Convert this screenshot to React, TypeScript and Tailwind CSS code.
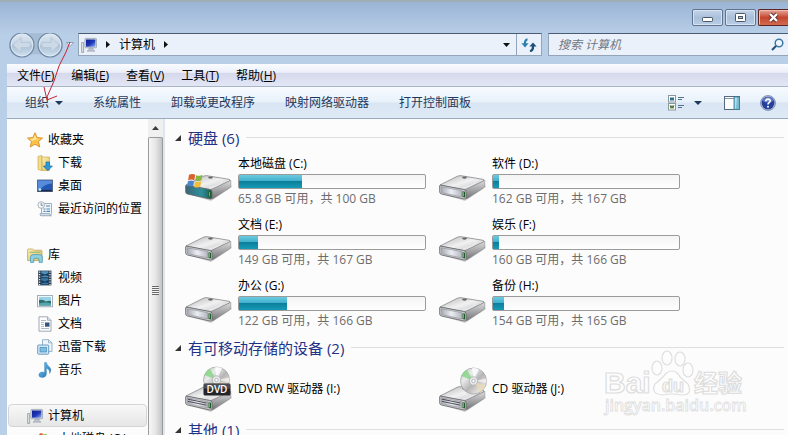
import type { ReactNode } from "react";

type Drive = { name: string; info: string; used: number; system?: boolean };

const drives: Drive[] = [
  { name: "本地磁盘 (C:)", info: "65.8 GB 可用，共 100 GB", used: 34, system: true },
  { name: "软件 (D:)", info: "162 GB 可用，共 167 GB", used: 3 },
  { name: "文档 (E:)", info: "149 GB 可用，共 167 GB", used: 10 },
  { name: "娱乐 (F:)", info: "160 GB 可用，共 166 GB", used: 3 },
  { name: "办公 (G:)", info: "122 GB 可用，共 166 GB", used: 26 },
  { name: "备份 (H:)", info: "154 GB 可用，共 165 GB", used: 6 },
];

const menus = [
  ["文件", "F"],
  ["编辑", "E"],
  ["查看", "V"],
  ["工具", "T"],
  ["帮助", "H"],
];

const commands = ["系统属性", "卸载或更改程序", "映射网络驱动器", "打开控制面板"];

function Defs() {
  return (
    <svg className="absolute h-0 w-0" aria-hidden="true">
      <defs>
        <linearGradient id="top" x1="0" y1="0" x2="1" y2="1">
          <stop offset="0" stopColor="#b4b4b6" />
          <stop offset="0.5" stopColor="#f1f1f2" />
          <stop offset="1" stopColor="#b9babc" />
        </linearGradient>
        <linearGradient id="side" x1="0" y1="0" x2="0" y2="1">
          <stop offset="0" stopColor="#dcdcdc" />
          <stop offset="1" stopColor="#707175" />
        </linearGradient>
        <linearGradient id="front" x1="0" y1="0" x2="1" y2="0">
          <stop offset="0" stopColor="#a7a9b2" />
          <stop offset="0.5" stopColor="#eceef5" />
          <stop offset="1" stopColor="#b7b9c2" />
        </linearGradient>
        <linearGradient id="sysfront" x1="0" y1="0" x2="1" y2="0">
          <stop offset="0" stopColor="#3b6577" />
          <stop offset="0.6" stopColor="#2e8f9c" />
          <stop offset="1" stopColor="#1e5b4c" />
        </linearGradient>
        <linearGradient id="disc" x1="0" y1="0" x2="1" y2="1">
          <stop offset="0" stopColor="#c3c6c8" />
          <stop offset="0.3" stopColor="#e9eaeb" />
          <stop offset="0.55" stopColor="#b6b4b6" />
          <stop offset="0.8" stopColor="#e6e2dd" />
          <stop offset="1" stopColor="#b8b8ba" />
        </linearGradient>
        <linearGradient id="screen" x1="0" y1="0" x2="1" y2="1">
          <stop offset="0" stopColor="#0d1d92" />
          <stop offset="0.55" stopColor="#2039b8" />
          <stop offset="1" stopColor="#8fb0f4" />
        </linearGradient>
        <linearGradient id="folder" x1="0" y1="0" x2="1" y2="1">
          <stop offset="0" stopColor="#fdf2b5" />
          <stop offset="1" stopColor="#dfb955" />
        </linearGradient>
        <linearGradient id="orb" x1="0" y1="0" x2="0" y2="1">
          <stop offset="0" stopColor="#dde7f1" />
          <stop offset="0.46" stopColor="#c6d5e4" />
          <stop offset="0.54" stopColor="#adc2d6" />
          <stop offset="1" stopColor="#cfe2f2" />
        </linearGradient>
        <linearGradient id="note" x1="0" y1="0" x2="1" y2="1">
          <stop offset="0" stopColor="#7cc6ee" />
          <stop offset="1" stopColor="#1670b4" />
        </linearGradient>
      </defs>
    </svg>
  );
}

function Flag() {
  return (
    <g>
      <path d="M3.5 17.8C6 16.6 8 16.8 9.8 17.8L8.8 23.2C7 22.2 5 22.2 2.6 23.2Z" fill="#d9632f" />
      <path d="M10.6 18.2C12.6 19 14.8 19 17 17.8L16 23.2C14 24.2 12 24.2 9.8 23.4Z" fill="#86b741" />
      <path d="M2.4 24.2C4.8 23.2 6.8 23.3 8.6 24.2L7.6 29.6C5.8 28.6 3.8 28.6 1.4 29.6Z" fill="#4a86cd" />
      <path d="M9.5 24.6C11.7 25.4 13.8 25.2 15.8 24.3L14.8 29.8C12.6 30.8 10.5 30.8 8.5 30Z" fill="#f2bd3a" />
    </g>
  );
}

function DriveBody({ system, optical }: { system?: boolean; optical?: boolean }) {
  return (
    <g strokeLinejoin="round">
      <path d="M3 36L26 43L47 29L45 26Z" fill="#000" opacity="0.18" />
      <path d="M1 27L18 18.4Q20 17.4 22 17.7L44 21.3Q46 21.8 44.5 23L27 31.5Q25.5 32 24 31.7Z" fill="url(#top)" stroke="#77787c" strokeWidth="0.7" />
      <path d="M26 31.8L45.8 22.4V28Q45.8 29 44 30.2L27.5 41Z" fill="url(#side)" stroke="#808184" strokeWidth="0.5" />
      <path d="M0.6 27.8Q0.6 27 2 27.2L24.5 31.4Q27 32 27 33.5V40Q27 41.4 25 41L2.4 36Q0.8 35.6 0.7 34Z" fill={system ? "url(#sysfront)" : "#c8c9cc"} stroke="#626368" strokeWidth="0.8" />
      {!system && <path d="M2 28.8L22.5 32.6V38.8L2.6 34.6Z" fill="url(#front)" stroke="#85868c" strokeWidth="0.5" />}
      {optical && <path d="M3 30.2L21.5 34M3 32.4L21.5 36.2" stroke="#3e4046" strokeWidth="0.9" />}
      <path d="M23.5 33.2L26 33.7V39.6L23.5 39.1Z" fill="#1d5b24" />
      <path d="M24.1 34L24.9 34.2V38.5L24.1 38.3Z" fill="#6fdc53" />
      <path d="M24 30Q36 27.5 37 23" fill="none" stroke="#fff" strokeWidth="0.7" opacity="0.8" />
      <ellipse cx="25.5" cy="19.6" rx="2.4" ry="1.1" fill="#6c6668" />
    </g>
  );
}

function HardDriveIcon({ system }: { system?: boolean }) {
  return (
    <svg className="size-12 shrink-0" viewBox="0 0 48 48" aria-hidden="true">
      <DriveBody system={system} />
      {system && <g transform="translate(.5 -1)"><Flag /></g>}
    </svg>
  );
}

function OpticalIcon({ dvd }: { dvd?: boolean }) {
  return (
    <svg className="size-12 shrink-0" viewBox="0 0 48 48" aria-hidden="true">
      <g transform="translate(0 4)"><DriveBody optical /></g>
      <g transform={dvd ? "translate(-3 0)" : "translate(0 1)"}>
        <circle cx="34.5" cy="15" r="13" fill="url(#disc)" stroke="#9d9ea1" strokeWidth="0.7" />
        <path d="M34.5 15L22.5 10Q24 5.5 28 3.8Z" fill="#84d583" opacity="0.8" />
        <path d="M34.5 15L33 2.2Q37 1.8 40 3.3Z" fill="#fff" opacity="0.8" />
        <path d="M34.5 15L46.5 19.5Q45 24 41 26.2Z" fill="#eadbb5" opacity="0.7" />
        <path d="M34.5 15L47.4 12.5V17Z" fill="#fff" opacity="0.6" />
        <circle cx="34.5" cy="15" r="4.2" fill="#e8e9eb" stroke="#a9abaf" strokeWidth="0.7" />
        <circle cx="34.5" cy="15" r="1.7" fill="#fcfcfc" stroke="#8e9095" strokeWidth="0.6" />
      </g>
      {dvd && (
        <g>
          <rect x="18.5" y="18.5" width="27" height="12" rx="1.5" fill="#232427" />
          <path d="M19 19H45V23.5Q32 25 19 23.5Z" fill="#4b4c50" />
          <text x="32" y="28" textAnchor="middle" fontSize="10" fontWeight="600" fill="#fff" fontFamily="Open Sans, sans-serif">DVD</text>
        </g>
      )}
    </svg>
  );
}

function Icon({ children }: { children: ReactNode }) {
  return (
    <svg className="size-4 shrink-0" viewBox="0 0 16 16" aria-hidden="true">
      {children}
    </svg>
  );
}

const computer = (
  <Icon>
    <path d="M0.6 5.5H2.6V15.4H0.6Z" fill="#dfe5df" stroke="#849287" strokeWidth="0.7" />
    <rect x="3.9" y="1.4" width="11.6" height="9.4" rx="0.7" fill="#d6d9df" stroke="#9199a8" strokeWidth="0.7" />
    <rect x="5" y="2.5" width="9.4" height="7.2" fill="url(#screen)" />
    <path d="M8 11H12V12.5L14 14.2H6L8 12.5Z" fill="#bdc3cb" stroke="#8c95a2" strokeWidth="0.5" />
  </Icon>
);

const star = (
  <Icon>
    <path d="M8 0.8L10.2 5.6L15.5 6.1L11.5 9.6L12.8 15L8 12.2L3.2 15L4.5 9.6L0.5 6.1L5.8 5.6Z" fill="#fbc246" stroke="#d78d26" strokeWidth="0.9" strokeLinejoin="round" />
    <path d="M8 2.8L9.3 6.5L13 7Q8 7 4.8 9L5 8.8L3 7L6.5 6.5Z" fill="#fff0b3" opacity="0.8" />
  </Icon>
);

const favorites: [string, ReactNode][] = [
  [
    "下载",
    <Icon>
      <path d="M1 1.5L5 0.5V15.5L1 14.5Z" fill="#f5dc86" stroke="#c5a04a" strokeWidth="0.6" />
      <path d="M5 2H12.5V15.5H5Z" fill="url(#folder)" stroke="#c5a04a" strokeWidth="0.6" />
      <path d="M9 7H12.6V11H15.4L10.8 15.7L6.4 11H9Z" fill="#2f9ad6" stroke="#1c6da8" strokeWidth="0.7" strokeLinejoin="round" />
    </Icon>,
  ],
  [
    "桌面",
    <Icon>
      <rect x="0.6" y="2" width="14.8" height="11.6" fill="#2358b5" stroke="#49566e" strokeWidth="0.8" />
      <path d="M1 2.5H15V5.5Q8 6 4 10.5L1 11Z" fill="#578bdc" />
      <path d="M1 12.6H15" stroke="#1a2a47" strokeWidth="1.4" />
      <circle cx="2.8" cy="11.6" r="1.5" fill="#b9dff2" />
    </Icon>,
  ],
  [
    "最近访问的位置",
    <Icon>
      <path d="M4.5 2.5H14.5V12.5Q14.5 14.5 12 14.5H3.5Q5 13.5 4.5 11Z" fill="#eef5fa" stroke="#8a9fb2" strokeWidth="0.8" />
      <path d="M3 12.5H12.5Q12.5 15 14.5 14.8H4.5Q2.8 14.6 3 12.5Z" fill="#d2dfe9" stroke="#8a9fb2" strokeWidth="0.7" />
      <path d="M9 5H13M6.5 8H8.5M9.5 8H13M6.5 10.4H8.5M9.5 10.4H13" stroke="#5887ad" strokeWidth="1.1" />
      <circle cx="4.2" cy="4" r="3.3" fill="#f5f7f9" stroke="#98a2ac" strokeWidth="0.8" />
      <path d="M4.2 1.9V4.3H6.2" fill="none" stroke="#68747f" strokeWidth="0.8" />
    </Icon>,
  ],
];

const library = (
  <Icon>
    <path d="M0.6 3Q0.6 2 1.5 2H5.5L7 3.2H14Q15 3.2 15 4.2V13.5H0.6Z" fill="url(#folder)" stroke="#b99a50" strokeWidth="0.7" />
    <path d="M2.5 5.2H13.5" stroke="#8cb978" strokeWidth="1.1" />
    <path d="M3.5 15.4V10Q3.5 7.6 6 7.6H12.5Q15.3 7.6 15.3 10V15.4H12V12.4Q12 11.2 10.8 11.2H8Q6.8 11.2 6.8 12.4V15.4Z" fill="#8fd0e3" stroke="#3c93b4" strokeWidth="0.7" />
  </Icon>
);

const libraries: [string, ReactNode][] = [
  [
    "视频",
    <Icon>
      <rect x="1.2" y="0.6" width="13.2" height="14.8" fill="#27394b" />
      <path d="M2.6 1.5V15M13 1.5V15" stroke="#e3edf3" strokeWidth="1.3" strokeDasharray="1.3 1.2" />
      <rect x="4.3" y="1.2" width="7" height="6" fill="#4f91bf" />
      <rect x="4.3" y="8.2" width="7" height="6.2" fill="#3678ac" />
      <path d="M4.3 3L7.8 4.6L11.3 3V6L7.8 5.4L4.3 6.6ZM4.3 10L7.8 11.6L11.3 10V13L7.8 12.4L4.3 13.6Z" fill="#183c5d" />
    </Icon>,
  ],
  [
    "图片",
    <Icon>
      <rect x="0.6" y="2.4" width="14.8" height="11.4" fill="#fff" stroke="#8e9ba5" strokeWidth="0.8" />
      <rect x="2" y="3.8" width="12" height="8.6" fill="#9ad2e5" />
      <path d="M2 7Q6 6 9 8.5Q12 7.5 14 8V12.4H2Z" fill="#2b6f72" />
      <path d="M2 10.5Q8 8.5 14 10.5V12.4H2Z" fill="#57a8ae" />
    </Icon>,
  ],
  [
    "文档",
    <Icon>
      <path d="M2 0.8H10.5L14 4.3V15.2H2Z" fill="#fdfdfe" stroke="#8994a1" strokeWidth="0.8" />
      <path d="M10.5 0.8V4.3H14" fill="#d8e0e8" stroke="#8994a1" strokeWidth="0.7" />
      <path d="M4 4.5H9M4 6.5H7M4 8.5H7M4 10.5H7M4 12.5H12" stroke="#94a9bf" strokeWidth="0.8" />
      <rect x="8" y="6.5" width="4.5" height="4.2" fill="#32547d" />
    </Icon>,
  ],
  [
    "迅雷下载",
    <Icon>
      <path d="M5.5 0.7H11.5L15 3.8V12.4H5.5Z" fill="#eff6fb" stroke="#7da2bf" strokeWidth="0.8" />
      <path d="M11.5 0.7V3.8H15" fill="none" stroke="#7da2bf" strokeWidth="0.7" />
      <rect x="0.7" y="6" width="11" height="9.2" rx="0.8" fill="#d7ebf7" stroke="#5b93bd" strokeWidth="0.9" />
      <rect x="3" y="8.3" width="6.4" height="4.7" fill="#7fbce2" stroke="#4487b5" strokeWidth="0.7" />
    </Icon>,
  ],
  [
    "音乐",
    <Icon>
      <path d="M7.6 0.5H9.4Q9.8 3 12.4 5Q15.4 7.5 12.6 11.5Q13.2 7.6 9.4 6.2V12Q9.2 15.3 5.3 15.5Q1.8 15.4 1.8 13Q2 10.3 5.4 10.1Q6.8 10 7.6 10.5Z" fill="url(#note)" stroke="#2a7cb4" strokeWidth="0.4" />
    </Icon>,
  ],
];

function TreeItem({ icon, label, child, active }: { icon: ReactNode; label: string; child?: boolean; active?: boolean }) {
  return (
    <button
      className={
        "flex h-[23px] w-full shrink-0 items-center gap-[5px] whitespace-nowrap rounded-sm border text-left " +
        (child ? "pl-7 " : "pl-[18px] ") +
        (active ? "border-[#d5d5d5] bg-linear-to-b from-[#f8f8f8] to-[#e6e6e6]" : "border-transparent")
      }
    >
      {icon}
      {label}
    </button>
  );
}

function Sidebar() {
  return (
    <nav className="flex w-[141px] shrink-0 flex-col gap-[23px] overflow-hidden px-px pt-[9px]">
      <div>
        <TreeItem icon={star} label="收藏夹" />
        {favorites.map(([label, icon]) => (
          <TreeItem key={label} icon={icon} label={label} child />
        ))}
      </div>
      <div>
        <TreeItem icon={library} label="库" />
        {libraries.map(([label, icon]) => (
          <TreeItem key={label} icon={icon} label={label} child />
        ))}
      </div>
      <div>
        <TreeItem icon={computer} label="计算机" active />
        <TreeItem
          icon={
            <Icon>
              <path d="M1 9L9 5L15 7V12L7 15L1 13Z" fill="#b9bcc0" />
              <g transform="translate(.5 -7) scale(.55)"><Flag /></g>
            </Icon>
          }
          label="本地磁盘 (C:)"
          child
        />
      </div>
    </nav>
  );
}

function Scrollbar() {
  return (
    <div className="flex w-[15px] shrink-0 flex-col bg-[#f0f0f0]" aria-hidden="true">
      <div className="flex h-[18px] shrink-0 items-center justify-center">
        <svg className="h-1 w-[7px]" viewBox="0 0 7 4"><path d="M0 4L3.5 0L7 4Z" fill="#3c3c3c" /></svg>
      </div>
      <div className="flex flex-1 items-center justify-center rounded-t-xs border border-b-0 border-[#9a9a9a] bg-linear-to-r from-[#f7f7f7] via-[#e6e6e8] to-[#c4c4c8] pt-[7px]">
        <div className="h-[9px] w-[7px] bg-[repeating-linear-gradient(to_bottom,#6a6a6a_0_1px,#f3f3f3_1px_2px)]" />
      </div>
    </div>
  );
}

function GroupHeader({ children }: { children: ReactNode }) {
  return (
    <div className="flex h-[27px] items-center gap-[7px] pl-[10px] pr-1">
      <svg className="size-[6px] shrink-0" viewBox="0 0 6 6" aria-hidden="true"><path d="M6 0V6H0Z" fill="#333" /></svg>
      <h2 className="whitespace-nowrap text-[15px] text-[#1e3287]">{children}</h2>
      <div className="h-px flex-1 bg-[#dedfe2]" />
    </div>
  );
}

function DriveTile({ drive }: { drive: Drive }) {
  return (
    <div className="flex h-[61px] items-center gap-[5px]">
      <HardDriveIcon system={drive.system} />
      <div className="w-[188px]">
        <div className="h-[18px] leading-4">{drive.name}</div>
        <div
          className="h-[15px] rounded-xs border border-[#9b9b9b] bg-linear-to-b from-[#f4f4f4] to-white"
          role="progressbar"
          aria-label={drive.name}
          aria-valuenow={drive.used}
        >
          <div
            className="h-full bg-[linear-gradient(to_bottom,#6ccbe0_0%,#41b0cc_45%,#0c7f9c_50%,#159bb6_100%)]"
            style={{ width: `${drive.used}%` }}
          />
        </div>
        <div className="h-[18px] whitespace-nowrap leading-5 text-[#6d6d6d]">{drive.info}</div>
      </div>
    </div>
  );
}

function Watermark() {
  return (
    <svg className="pointer-events-none absolute bottom-[14px] right-[38px] h-[72px] w-[148px]" viewBox="0 0 148 72" fill="#fdfdfd" stroke="#dedede" strokeWidth="1.2" aria-hidden="true">
      <text x="2" y="44" fontSize="30" fontWeight="700" fontFamily="Liberation Sans, sans-serif">Bai</text>
      <ellipse cx="55" cy="19" rx="5" ry="7" />
      <ellipse cx="65" cy="9" rx="5" ry="7" />
      <ellipse cx="78" cy="10" rx="5" ry="7" />
      <ellipse cx="86" cy="21" rx="5" ry="7" />
      <path d="M70 22Q75 22 78 28L86 35Q91 46 80 46Q70 44 61 46Q48 45 53 35L61 28Q65 22 70 22Z" />
      <text x="60" y="43" fontSize="18" fontWeight="700" fontFamily="Liberation Sans, sans-serif">du</text>
      <text x="92" y="43" fontSize="24" fontWeight="700" fontFamily="Noto Sans CJK SC, sans-serif">经验</text>
      <text x="3" y="62" fontSize="16" fontWeight="600" strokeWidth="0.8" fontFamily="Open Sans, sans-serif">jingyan.baidu.com</text>
    </svg>
  );
}

function CaptionButtons() {
  return (
    <div className="flex h-[33px] items-start justify-end gap-[2px] pt-[9px]">
      <button aria-label="最小化" className="flex h-[17px] w-[31px] items-center justify-center rounded-xs border border-[#5f7391] bg-linear-to-b from-[#c5d5e9] via-[#a9bfda] to-[#b9cee6] shadow-[inset_0_0_0_1px_#d8e4f2]">
        <svg className="h-[11px] w-[13px]" viewBox="0 0 13 11"><rect x="1.5" y="5.5" width="10" height="4" rx="0.8" fill="#fff" stroke="#4b5669" /></svg>
      </button>
      <button aria-label="最大化" className="flex h-[17px] w-[31px] items-center justify-center rounded-xs border border-[#5f7391] bg-linear-to-b from-[#c5d5e9] via-[#a9bfda] to-[#b9cee6] shadow-[inset_0_0_0_1px_#d8e4f2]">
        <svg className="h-[11px] w-[13px]" viewBox="0 0 13 11">
          <rect x="1.5" y="1.5" width="10" height="8" rx="0.8" fill="#fff" stroke="#4b5669" />
          <rect x="4.5" y="4.5" width="4" height="2" fill="#b5c7de" stroke="#4b5669" />
        </svg>
      </button>
      <button aria-label="关闭" className="flex h-[17px] w-[30px] items-center justify-center rounded-l-xs border border-r-0 border-[#5c2523] bg-linear-to-b from-[#e3a598] via-[#c5452f] to-[#d26c52] shadow-[inset_1px_1px_0_#eebcb2]">
        <svg className="h-[11px] w-[13px]" viewBox="0 0 13 11"><path d="M3 2L10 9M10 2L3 9" stroke="#59312f" strokeWidth="4" /><path d="M3 2L10 9M10 2L3 9" stroke="#fff" strokeWidth="2.4" /></svg>
      </button>
    </div>
  );
}

function AddressRow() {
  return (
    <div className="flex h-[31px] items-start">
      <svg className="h-[27px] w-[71px] shrink-0" viewBox="0 0 71 27" aria-hidden="true">
        <path d="M16 1Q29 -1 42 1Q55 1 56 12Q55 25 42 24Q29 18 16 24Q2 24 2 12Q3 2 16 1Z" fill="#9fb5cf" opacity="0.7" />
        {[15, 43].map((cx) => (
          <g key={cx}>
            <circle cx={cx} cy="12" r="12" fill="url(#orb)" stroke="#6f87a3" strokeWidth="1.2" />
            <circle cx={cx} cy="12" r="10.8" fill="none" stroke="#e3edf7" strokeWidth="0.8" />
          </g>
        ))}
        <path d="M6 12L14 4.5V9.5H23V14.5H14V19.5Z" fill="#ccd9e6" stroke="#b3c4d5" strokeWidth="0.8" />
        <path d="M52 12L44 4.5V9.5H35V14.5H44V19.5Z" fill="#ccd9e6" stroke="#b3c4d5" strokeWidth="0.8" />
        <path d="M59.5 9.5H66.5L63 13.5Z" fill="#edf2f8" stroke="#8095ae" strokeWidth="0.8" />
      </svg>
      <div className="flex h-[23px] flex-1 items-center border border-[#94a5ba] border-t-[#4c5b75] bg-[#eaf1fa] pl-[2px]">
        <div className="flex flex-1 items-center gap-[9px]">
          {computer}
          <svg className="h-[7px] w-1" viewBox="0 0 4 7" aria-hidden="true"><path d="M0 0L4 3.5L0 7Z" fill="#111" /></svg>
          <button>计算机</button>
          <svg className="h-[7px] w-1" viewBox="0 0 4 7" aria-hidden="true"><path d="M0 0L4 3.5L0 7Z" fill="#111" /></svg>
        </div>
        <button aria-label="历史记录" className="flex h-full w-5 items-center justify-center">
          <svg className="h-1 w-[7px]" viewBox="0 0 7 4"><path d="M0 0H7L3.5 4Z" fill="#111" /></svg>
        </button>
        <button aria-label="刷新" className="flex h-full w-[25px] items-center justify-center border-l border-[#94a5ba]">
          <svg className="h-[14px] w-4" viewBox="0 0 16 14">
            <path d="M6.5 1.2Q3.5 2 4 6.5" fill="none" stroke="#2d7fab" strokeWidth="2.2" />
            <path d="M0.4 5.2H7.6L4 9.4Z" fill="#2d7fab" />
            <path d="M9 13.2Q12.4 12.4 12 8" fill="none" stroke="#1d5178" strokeWidth="2.2" />
            <path d="M8.4 8.6H15.6L12 4.4Z" fill="#1d5178" />
          </svg>
        </button>
      </div>
      <div className="ml-[6px] flex h-[23px] w-[240px] items-center border border-r-0 border-[#94a5ba] border-t-[#4c5b75] bg-[#eaf1fa] pl-[9px] pr-1">
        <input aria-label="搜索" placeholder="搜索 计算机" className="min-w-0 flex-1 bg-transparent italic outline-none placeholder:text-[#727780]" />
        <svg className="size-[13px]" viewBox="0 0 13 13" aria-hidden="true">
          <path d="M5.5 7.5L1 12" stroke="#28527a" strokeWidth="2.2" />
          <circle cx="8" cy="5" r="3.8" fill="#eef6fd" stroke="#3b78a6" strokeWidth="1.5" />
        </svg>
      </div>
    </div>
  );
}

function CommandBar() {
  return (
    <div className="flex h-8 shrink-0 items-center gap-[30px] border-b border-[#95abc0] bg-[linear-gradient(to_bottom,#f7fbff_0%,#e8f1fa_48%,#d9e5f3_52%,#dfeaf6_100%)] pl-[18px] pr-3 text-[#1e395b]">
      <button className="flex items-center gap-[6px]">
        组织
        <svg className="h-1 w-2" viewBox="0 0 8 4" aria-hidden="true"><path d="M0 0H8L4 4Z" fill="#1e395b" /></svg>
      </button>
      {commands.map((c) => (
        <button key={c} className="whitespace-nowrap">{c}</button>
      ))}
      <div className="ml-auto flex items-center">
        <button aria-label="更改您的视图" className="flex items-center gap-[9px]">
          <svg className="h-4 w-[17px]" viewBox="0 0 17 16">
            <rect x="0.5" y="0.5" width="7" height="6.5" fill="#fff" stroke="#8c979e" />
            <rect x="0.5" y="8.5" width="7" height="6.5" fill="#fff" stroke="#8c979e" />
            <rect x="2" y="2.5" width="4" height="3" fill="#2d7195" />
            <path d="M2 10.5H6V13.5H2Z" fill="#6a9b4b" />
            <path d="M2 10.5L4 12.5L6 10.5" stroke="#30524c" fill="none" />
            <path d="M10 2.5H16M10 4.5H14M10 10.5H16M10 12.5H14" stroke="#54738f" />
          </svg>
          <svg className="h-1 w-2" viewBox="0 0 8 4"><path d="M0 0H8L4 4Z" fill="#1e395b" /></svg>
        </button>
        <button aria-label="显示预览窗格" className="ml-[22px]">
          <svg className="h-[14px] w-4" viewBox="0 0 16 14">
            <rect x="0.5" y="0.5" width="15" height="13" fill="#fdfdfd" stroke="#536b7d" />
            <path d="M1 2.5H10" stroke="#8597a5" />
            <rect x="10" y="1" width="5.5" height="12.5" fill="#77bdd3" stroke="#3e7b93" strokeWidth="0.8" />
            <path d="M11 1.5H13L12 12.5H11Z" fill="#b4e0ec" />
          </svg>
        </button>
        <button aria-label="获取帮助" className="ml-5">
          <svg className="size-4" viewBox="0 0 16 16">
            <circle cx="8" cy="8" r="7.5" fill="#a9b7d3" stroke="#6c7ea6" strokeWidth="0.7" />
            <circle cx="8" cy="8" r="6.3" fill="#263f9c" />
            <path d="M2.5 6Q4 2 8 2Q12 2 13.5 6Q8 9 2.5 6Z" fill="#5e78c4" />
            <path d="M5.8 6.2Q5.9 4.1 8.1 4.1Q10.3 4.2 10.2 6Q10.1 7 9 7.7Q8 8.3 8 9.4" fill="none" stroke="#fff" strokeWidth="1.6" />
            <circle cx="8" cy="11.7" r="1" fill="#fff" />
          </svg>
        </button>
      </div>
    </div>
  );
}

export default function App() {
  return (
    <div className="relative flex h-screen flex-col overflow-hidden border-t-2 border-[#a1adb4] bg-[linear-gradient(to_bottom,#9bb5d5_0,#b9cfe8_33px)] pl-[7px] font-['Open_Sans','Noto_Sans_CJK_SC',sans-serif] text-xs text-black">
      <Defs />
      <header className="-mt-[2px] shrink-0">
        <CaptionButtons />
        <AddressRow />
      </header>
      <div className="flex h-[23px] shrink-0 items-center gap-[17px] border-b border-[#a9b5c9] bg-[linear-gradient(to_bottom,#fafcff_0%,#eceff9_38%,#d5d9ec_42%,#e3e6f5_100%)] pl-[10px] pt-px">
        {menus.map(([label, key]) => (
          <button key={key} className="whitespace-nowrap">
            {label}(<u>{key}</u>)
          </button>
        ))}
      </div>
      <CommandBar />
      <div className="flex min-h-0 flex-1 bg-[#fcfcfc]">
        <Sidebar />
        <Scrollbar />
        <main className="relative min-w-0 flex-1 overflow-hidden border-l-2 border-[#dfe6f0] pt-[5px]">
          <GroupHeader>硬盘 (6)</GroupHeader>
          <div className="grid grid-cols-[repeat(auto-fill,254px)] pl-5">
            {drives.map((d) => (
              <DriveTile key={d.name} drive={d} />
            ))}
          </div>
          <GroupHeader>有可移动存储的设备 (2)</GroupHeader>
          <div className="grid grid-cols-[repeat(auto-fill,254px)] pl-5">
            <div className="flex h-[55px] items-center gap-[5px]"><OpticalIcon dvd />DVD RW 驱动器 (I:)</div>
            <div className="flex h-[55px] items-center gap-[5px]"><OpticalIcon />CD 驱动器 (J:)</div>
          </div>
          <GroupHeader>其他 (1)</GroupHeader>
          <Watermark />
        </main>
      </div>
      <svg className="pointer-events-none absolute left-10 top-[38px] h-[66px] w-9" viewBox="0 0 36 66" fill="none" stroke="#c8232f" strokeWidth="1" aria-hidden="true">
        <path d="M30 2L26 12L19 26L14 41L7 57M4 47L7 60L17 56" />
      </svg>
    </div>
  );
}
